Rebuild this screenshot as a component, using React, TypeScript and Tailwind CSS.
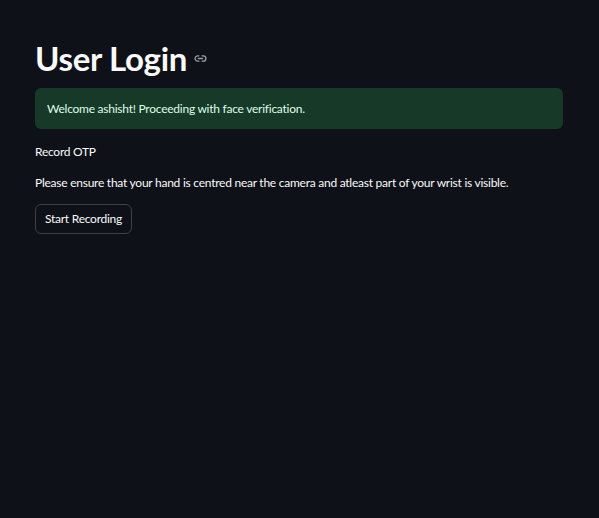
export default function App() {
  return (
    <div className="min-h-screen w-full bg-[#0e1117] text-[#fafafa]" style={{ fontFamily: '"Lato", "Noto Sans", sans-serif' }}>
      <div className="px-[35px] pt-[38px]">
        <div className="w-[528px]">
          <h1 className="flex items-center gap-[7px] text-[33px] font-bold leading-[40px] tracking-[-0.3px]">
            User Login
            <svg width="13" height="13" viewBox="0 0 24 24" fill="none" stroke="#9a9ca3" strokeWidth="2.4" strokeLinecap="round" className="mt-[1px]">
              <path d="M9 17H7A5 5 0 0 1 7 7h2" />
              <path d="M15 7h2a5 5 0 1 1 0 10h-2" />
              <line x1="8" y1="12" x2="16" y2="12" />
            </svg>
          </h1>
          <div className="mt-[10px] h-[41px] rounded-[6px] bg-[#173928] px-[12px] flex items-center text-[12px] tracking-[-0.25px] text-[#dffde9]">
            Welcome ashisht! Proceeding with face verification.
          </div>
          <p className="mt-[14px] text-[12px] tracking-[-0.25px] leading-[18px]">Record OTP</p>
          <p className="mt-[13px] text-[12px] tracking-[-0.25px] leading-[18px]">
            Please ensure that your hand is centred near the camera and atleast part of your wrist is visible.
          </p>
          <button className="mt-[12px] h-[30px] px-[9px] rounded-[6px] border border-[#3d4046] bg-[#0e1117] text-[12px] tracking-[-0.25px] text-[#fafafa]">
            Start Recording
          </button>
        </div>
      </div>
    </div>
  )
}
